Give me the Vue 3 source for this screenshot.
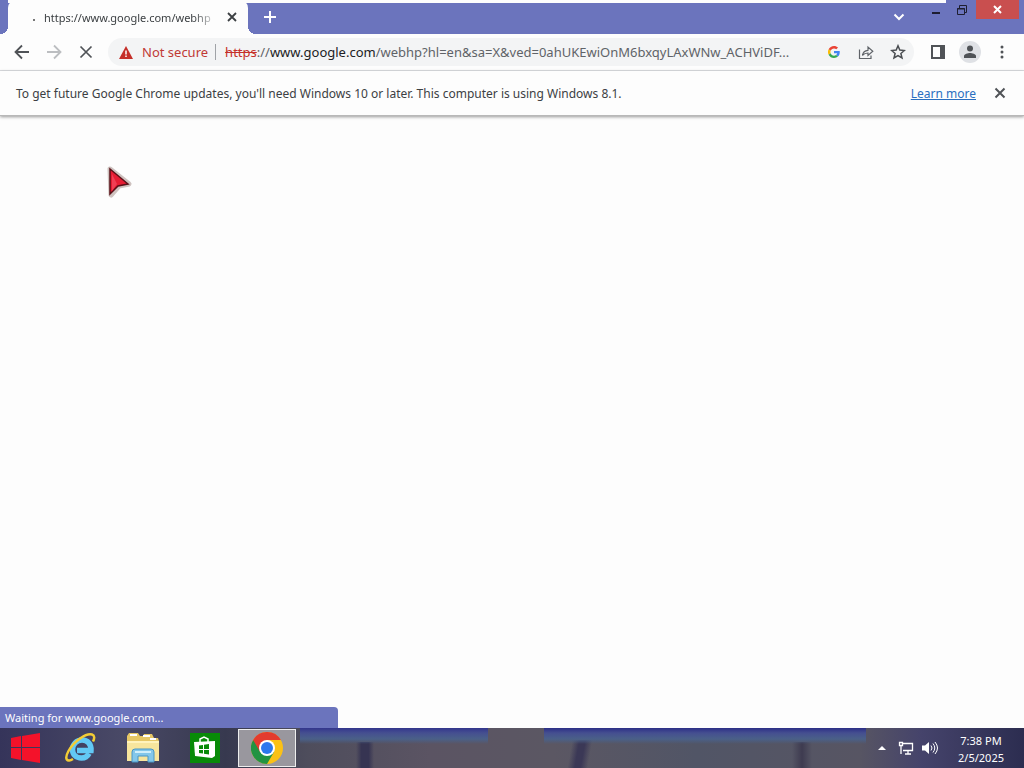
<script setup>
import { ref } from 'vue'

const tabTitle = 'https://www.google.com/webhp'
const url = {
  scheme: 'https',
  host: 'www.google.com',
  path: '/webhp?hl=en&sa=X&ved=0ahUKEwiOnM6bxqyLAxWNw_ACHViDF...'
}
const status = 'Waiting for www.google.com...'
const showInfobar = ref(true)
</script>

<template>
  <div class="desktop">
    <header class="tab-strip">
      <div class="tab">
        <span class="spinner"></span>
        <span class="tab-title">{{ tabTitle }}</span>
        <button class="tab-close" aria-label="Close tab">
          <svg width="10" height="10" viewBox="0 0 10 10"><path d="M1 1l8 8M9 1l-8 8" stroke="#3c4043" stroke-width="1.800" /></svg>
        </button>
      </div>
      <button class="new-tab" aria-label="New tab">
        <svg width="12" height="12" viewBox="0 0 12 12"><path d="M6 0v12M0 6h12" stroke="#fff" stroke-width="2" /></svg>
      </button>
      <button class="tab-search" aria-label="Search tabs">
        <svg width="12" height="8" viewBox="0 0 12 8"><path d="M1.500 1.500L6 6l4.500-4.500" fill="none" stroke="#fff" stroke-width="2" /></svg>
      </button>
      <div class="window-controls">
        <button class="win-btn" aria-label="Minimize">
          <svg width="12" height="12" viewBox="0 0 12 12"><path d="M2 9h8" stroke="#1e1e30" stroke-width="2" /></svg>
        </button>
        <button class="win-btn" aria-label="Restore">
          <svg width="12" height="12" viewBox="0 0 12 12"><path d="M1.500 4.500h7v6h-7zM1 5h8M3.500 4V1.500h7v7H9" fill="none" stroke="#1e1e30" /></svg>
        </button>
        <button class="win-btn win-close" aria-label="Close">
          <svg width="9" height="9" viewBox="0 0 9 9"><path d="M1 1l7 7M8 1L1 8" stroke="#fff" stroke-width="2" /></svg>
        </button>
      </div>
    </header>

    <nav class="toolbar">
      <button class="tool-btn" aria-label="Back">
        <svg width="16" height="16" viewBox="0 0 16 16"><path d="M15 8H2M8 1.500L1.500 8 8 14.500" fill="none" stroke="#505357" stroke-width="1.800" /></svg>
      </button>
      <button class="tool-btn" aria-label="Forward">
        <svg width="16" height="16" viewBox="0 0 16 16"><path d="M1 8h13M8 1.500L14.500 8 8 14.500" fill="none" stroke="#bcbec1" stroke-width="1.800" /></svg>
      </button>
      <button class="tool-btn" aria-label="Stop">
        <svg width="14" height="14" viewBox="0 0 14 14"><path d="M1.500 1.500l11 11M12.500 1.500l-11 11" stroke="#505357" stroke-width="1.700" /></svg>
      </button>

      <div class="omnibox">
        <button class="security">
          <svg width="14" height="13" viewBox="0 0 14 13">
            <path d="M7 0l7 13H0z" fill="#c5302a" />
            <path d="M7 4.500v4M7 9.500v1.500" stroke="#fff" stroke-width="1.500" />
          </svg>
          <span>Not secure</span>
        </button>
        <span class="divider"></span>
        <div class="url"><s>{{ url.scheme }}</s>://<span class="host">{{ url.host }}</span><span class="path">{{ url.path }}</span></div>
        <button class="box-btn" aria-label="Search with Google">
          <svg width="12" height="12" viewBox="0 0 48 48">
            <path d="M24 9.500c3.500 0 6.700 1.200 9.200 3.600l6.900-6.900C35.900 2.400 30.500 0 24 0 14.600 0 6.500 5.400 2.600 13.200l8 6.200C12.400 13.700 17.700 9.500 24 9.500z" fill="#ea4335" />
            <path d="M47 24.500c0-1.600-.2-3.100-.4-4.500H24v9h12.900c-.6 3-2.200 5.500-4.700 7.200l7.700 6C44.400 38 47 31.800 47 24.500z" fill="#4285f4" />
            <path d="M10.500 28.600A14.500 14.500 0 0110.500 19.400l-8-6.200a24 24 0 000 21.600z" fill="#fbbc05" />
            <path d="M24 48c6.500 0 11.900-2.100 15.900-5.800l-7.700-6c-2.200 1.500-4.900 2.300-8.200 2.300-6.300 0-11.600-4.200-13.500-9.900l-8 6.200C6.500 42.600 14.600 48 24 48z" fill="#34a853" />
          </svg>
        </button>
        <button class="box-btn" aria-label="Share this page">
          <svg width="16" height="15" viewBox="0 0 16 15"><path d="M1.500 4.500v9h11.500v-3M4.500 10.500c.5-3.500 2.500-5 5.500-5.200V2l4.800 4.300L10 10.500V8C7.500 8 6 8.500 4.500 10.500z" fill="none" stroke="#5f6368" stroke-width="1.200" /></svg>
        </button>
        <button class="box-btn" aria-label="Bookmark this tab">
          <svg width="16" height="16" viewBox="0 0 16 16"><path d="M8 1.800l1.800 4.300 4.600.4-3.500 3 1.100 4.500L8 11.600 4 14l1.100-4.500-3.500-3 4.600-.4z" fill="none" stroke="#4a4d51" stroke-width="1.500" /></svg>
        </button>
      </div>

      <button class="tool-btn" aria-label="Side panel">
        <svg width="14" height="14" viewBox="0 0 14 14"><path d="M1 1h12v12H1z" fill="none" stroke="#505357" stroke-width="2" /><path d="M9 1h4v12H9z" fill="#505357" /></svg>
      </button>
      <button class="tool-btn" aria-label="Profile">
        <svg width="22" height="22" viewBox="0 0 22 22">
          <circle cx="11" cy="11" r="11" fill="#dfe1e5" />
          <circle cx="11" cy="7.500" r="3" fill="#505357" />
          <path d="M5 17v-2c0-2 4-3 6-3s6 1 6 3v2z" fill="#505357" />
        </svg>
      </button>
      <button class="tool-btn" aria-label="Menu">
        <svg width="4" height="14" viewBox="0 0 4 14"><g fill="#505357"><circle cx="2" cy="2" r="1.500" /><circle cx="2" cy="7" r="1.500" /><circle cx="2" cy="12" r="1.500" /></g></svg>
      </button>
    </nav>

    <section v-if="showInfobar" class="infobar">
      <p>To get future Google Chrome updates, you'll need Windows 10 or later. This computer is using Windows 8.1.</p>
      <a href="#">Learn more</a>
      <button aria-label="Dismiss" @click="showInfobar = false">
        <svg width="12" height="12" viewBox="0 0 12 12"><path d="M1.500 1.500l9 9M10.500 1.500l-9 9" stroke="#505357" stroke-width="2" /></svg>
      </button>
    </section>

    <main class="page">
      <svg class="cursor" width="28" height="34" viewBox="0 0 28 34">
        <path d="M4 3L23 18 13 20 5 29z" fill="none" stroke="#b9a8a4" stroke-width="5" stroke-linejoin="round" opacity=".7" />
        <path d="M4 3L22 18 12 20 4 28z" fill="#e61c33" stroke="#5a1018" stroke-width="1.500" />
        <path d="M6 8l5 10-5 7z" fill="#f8566a" opacity=".6" />
      </svg>
      <div class="status-bubble">{{ status }}</div>
    </main>

    <footer class="taskbar">
      <button class="start" aria-label="Start">
        <svg width="30" height="30" viewBox="0 0 30 30" fill="#f4122a"><path d="M1 5l10-2v11H1zM12 3l18-3v14H12zM1 15h10v12L1 25zM12 15h18v15l-18-3z" /></svg>
      </button>
      <button class="task" aria-label="Internet Explorer">
        <svg width="32" height="32" viewBox="0 0 32 32">
          <path d="M24 21.500c-1.500 3-4 4.500-7.500 4.500C11 26 7.500 22.500 7.500 17.500S11.500 8 17 8s9.500 4 9 10.500H12" fill="none" stroke="#62c9f5" stroke-width="5.500" />
          <path d="M8 27C2 31-1 27 3.500 19 9 9 21 1 27 2.500c3 1 2.500 4 1 7" fill="none" stroke="#f3cc35" stroke-width="2.500" />
        </svg>
      </button>
      <button class="task" aria-label="File Explorer">
        <svg width="34" height="32" viewBox="0 0 34 32">
          <path d="M1 4l2-3h9l2 3h3l1-2h8l2 4h4l1 3v20H1z" fill="#e6c765" />
          <path d="M4 3h7M17 4h7M24 7h6" stroke="#fff" stroke-width="2" />
          <path d="M1 9h32v20H1z" fill="#f7e59d" />
          <path d="M1 10h32" stroke="#fff3bd" stroke-width="2" />
          <path d="M6 30V20q0-3 3-3h16q3 0 3 3v10h-6v-6H12v6z" fill="#83c7ea" stroke="#4896c5" />
          <path d="M9 20h16" stroke="#d1effa" stroke-width="2" />
        </svg>
      </button>
      <button class="task" aria-label="Store">
        <svg width="30" height="30" viewBox="0 0 30 30">
          <path d="M0 0h30v30H0z" fill="#088a08" />
          <path d="M4 9l21-1v15l-3 2-17-2z" fill="#fff" />
          <path d="M10 9V6l4-2 4 2v3" fill="none" stroke="#fff" stroke-width="1.500" />
          <path d="M9 12.500l4-.6V16H9zM14 11.800l5-.7V16h-5zM9 17h4v3.600L9 20zM14 17h5v4.500l-5-.8z" fill="#088a08" />
        </svg>
      </button>
      <button class="task active" aria-label="Google Chrome">
        <svg width="32" height="32" viewBox="0 0 32 32">
          <circle cx="16" cy="16" r="16" fill="#fbc116" />
          <path d="M16 16L2.140 8A16 16 0 0016 32l7-12z" fill="#229342" />
          <path d="M2.140 8A16 16 0 0129.860 8H16L9.070 20z" fill="#e33b2e" />
          <circle cx="16" cy="16" r="8" fill="#fff" />
          <circle cx="16" cy="16" r="6" fill="#2c78ed" />
        </svg>
      </button>

      <div class="tray">
        <button aria-label="Show hidden icons">
          <svg width="8" height="4" viewBox="0 0 8 4"><path d="M4 0l4 4H0z" fill="#fff" /></svg>
        </button>
        <button aria-label="Network">
          <svg width="16" height="14" viewBox="0 0 16 14" fill="none" stroke="#fff"><path d="M5 2.500h9.500v7H5M10 10v3M7 13h6M1.500 1.500h3v3h-3zM3 5v8" stroke-width="1.300" /></svg>
        </button>
        <button aria-label="Volume">
          <svg width="16" height="14" viewBox="0 0 16 14"><path d="M0 4.500h3L7 1v12L3 9.500H0z" fill="#fff" /><path d="M9 4.500q2 2.500 0 5M11 2.500q3.500 4.500 0 9M13 1q5 6 0 12" fill="none" stroke="#fff" /></svg>
        </button>
        <time class="clock" datetime="2025-02-05T19:38">
          <span>7:38 PM</span>
          <span>2/5/2025</span>
        </time>
      </div>
    </footer>
  </div>
</template>

<style>
body {
  background: #fdfdfd;
}
</style>

<style scoped>
.desktop {
  display: flex;
  flex-direction: column;
  min-height: 100vh;
  font-family: "Noto Sans", "Open Sans", sans-serif;
  font-size: 11px;
  color: #3c4043;
}

button {
  display: flex;
  align-items: center;
  justify-content: center;
  flex-shrink: 0;
  padding: 0;
  border: none;
  background: none;
  font: inherit;
  color: inherit;
}

.tab-strip {
  display: flex;
  height: 34px;
  padding-left: 8px;
  background: linear-gradient(#fdfdfd, #fdfdfd) 8px 0 / calc(100% - 86px) 3px no-repeat #6b74bd;
}

.tab {
  position: relative;
  display: flex;
  align-items: center;
  width: 240px;
  box-sizing: border-box;
  padding: 0 10px 0 25px;
  background: #fdfdfd;
  border-radius: 8px 8px 0 0;
}

/* flared feet of the active tab */
.tab::before,
.tab::after {
  content: "";
  position: absolute;
  bottom: 0;
  width: 8px;
  height: 8px;
}

.tab::before {
  left: -8px;
  background: radial-gradient(circle at 0 0, transparent 8px, #fdfdfd 8px);
}

.tab::after {
  right: -8px;
  background: radial-gradient(circle at 100% 0, transparent 8px, #fdfdfd 8px);
}

.spinner {
  width: 2px;
  height: 2px;
  margin: 6px 9px 0 0;
  background: #777;
}

.tab-title {
  flex: 1;
  overflow: hidden;
  white-space: nowrap;
  mask-image: linear-gradient(to right, #000 86%, transparent);
}

.tab-close {
  width: 12px;
  margin-left: 8px;
}

.new-tab {
  width: 44px;
}

.tab-search {
  width: 28px;
  margin-left: auto;
}

.window-controls {
  display: flex;
  align-items: flex-start;
  margin: 0 5px 0 10px;
}

.win-btn {
  width: 26px;
  height: 19px;
}

.win-close {
  width: 43px;
  margin-left: 1px;
  background: #c94f4f;
}

.toolbar {
  display: flex;
  align-items: center;
  height: 36px;
  padding: 0 6px;
  background: #fdfdfd;
  border-bottom: 1px solid #dadce0;
}

.tool-btn {
  width: 32px;
  height: 32px;
}

.omnibox {
  display: flex;
  align-items: center;
  flex: 1;
  min-width: 0;
  height: 28px;
  margin: 0 8px 0 6px;
  padding-left: 11px;
  border-radius: 14px;
  background: #f3f4f5;
  font-size: 13px;
}

.security {
  gap: 9px;
  color: #c03a35;
}

.divider {
  width: 1px;
  height: 16px;
  margin: 0 9px 0 7px;
  background: #a0a3a7;
}

.url {
  flex: 1;
  min-width: 0;
  overflow: hidden;
  white-space: nowrap;
  text-overflow: ellipsis;
  color: #5f6368;
}

.url s {
  color: #c5302a;
}

.host {
  color: #202124;
}

.box-btn {
  width: 32px;
  height: 28px;
}

.infobar {
  display: flex;
  align-items: center;
  height: 44px;
  padding: 0 12px 0 16px;
  background: #fdfdfd;
  border-bottom: 1px solid #b8b8b8;
  box-shadow: 0 1px 3px #999;
  font-size: 12px;
}

.infobar p {
  flex: 1;
  margin: 0;
  white-space: nowrap;
}

.infobar a {
  margin-right: 12px;
  color: #2a6fc0;
}

.infobar button {
  width: 24px;
  height: 24px;
}

.page {
  position: relative;
  flex: 1;
}

.cursor {
  position: absolute;
  top: 50px;
  left: 106px;
}

.status-bubble {
  position: absolute;
  left: 0;
  bottom: 0;
  width: 33%;
  height: 21px;
  padding-left: 5px;
  box-sizing: border-box;
  border-radius: 0 4px 0 0;
  background: #6b74bd;
  color: #fff;
  line-height: 21px;
}

.taskbar {
  display: flex;
  height: 40px;
  background:
    linear-gradient(to bottom, #33368c, #454f90 5px, #4a6088 11px, transparent) 300px 0 / 188px 16px no-repeat,
    linear-gradient(to bottom, #2c2f86, #454f90 5px, #4a6088 11px, transparent) 544px 0 / 322px 16px no-repeat,
    linear-gradient(to right, transparent, #363452 30%, #363452 70%, transparent) 356px 14px / 18px 26px no-repeat,
    linear-gradient(100deg, transparent 15%, #3b3856 40%, #3b3856 60%, transparent 85%) 568px 12px / 24px 28px no-repeat,
    linear-gradient(to right, transparent, #3e3b50, transparent) 792px 14px / 20px 26px no-repeat,
    linear-gradient(to right, #35345a, #494966 12%, #37394f 22%, #4e4d5c 30%, #5b5463 42%, #5b5763 54%, #515566 68%, #575563 84%, #45436b 90%, #2c2d50);
  color: #fff;
}

.start {
  width: 50px;
}

.task {
  width: 58px;
  margin: 1px 2px;
}

.task.active {
  box-sizing: border-box;
  border: 1px solid #eee;
  background: #99979e;
}

.tray {
  display: flex;
  align-items: center;
  margin-left: auto;
  padding-right: 16px;
}

.tray button {
  width: 24px;
  height: 40px;
}

.clock {
  display: flex;
  flex-direction: column;
  align-items: center;
  width: 54px;
  margin-left: 12px;
  padding-top: 2px;
  line-height: 17px;
  white-space: nowrap;
}
</style>
